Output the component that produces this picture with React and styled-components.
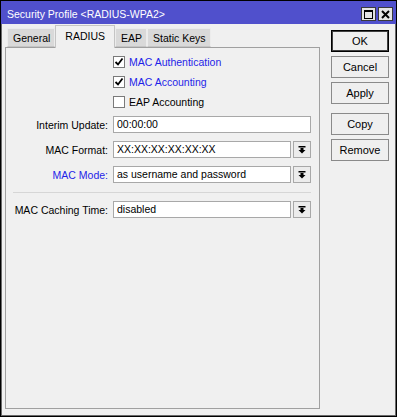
import React from 'react';
import styled, { createGlobalStyle } from 'styled-components';

const GlobalStyle = createGlobalStyle`
  html, body {
    margin: 0;
    padding: 0;
    background: #f0f0f0;
  }
  * {
    box-sizing: border-box;
  }
`;

const Frame = styled.div`
  width: 397px;
  height: 417px;
  border: 1px solid #000;
  display: flex;
  flex-direction: column;
  background: #f0f0f0;
  font-family: 'Liberation Sans', Arial, sans-serif;
  font-size: 10.5px;
  color: #000;
`;

const TitleBar = styled.div`
  height: 23px;
  flex: none;
  display: flex;
  align-items: center;
  padding: 3px 3px 0 6px;
  background: #5050cc;
  color: #fff;
  font-size: 10.5px;
`;

const Title = styled.div`
  flex: 1;
  white-space: nowrap;
`;

const TitleButtons = styled.div`
  display: flex;
  gap: 2px;
`;

const TitleButton = styled.div`
  width: 15px;
  height: 14px;
  background: #e4e4e4;
  border: 1px solid #3a3a3a;
  display: flex;
  align-items: center;
  justify-content: center;
`;

const Body = styled.div`
  flex: 1;
  display: flex;
  padding: 1px 6px 7px 4px;
  box-shadow: inset 1px 0 #6a6a6a, inset -1px 0 #6a6a6a, inset 0 -1px #6a6a6a;
`;

const LeftColumn = styled.div`
  width: 315px;
  display: flex;
  flex-direction: column;
`;

const TabStrip = styled.div`
  height: 23px;
  display: flex;
  align-items: flex-end;
  padding-left: 2px;
  margin-bottom: -1px;
  position: relative;
  z-index: 1;
`;

const Tab = styled.div`
  height: ${(p) => (p.$active ? '23px' : '19px')};
  padding: ${(p) => (p.$active ? '3px 9px 0 9px' : '2px 4px 0 5px')};
  background: ${(p) => (p.$active ? '#f0f0f0' : '#d9d9d9')};
  border: 1px solid ${(p) => (p.$active ? '#c4c4c4' : '#ececec')};
  border-bottom: ${(p) => (p.$active ? 'none' : '1px solid #c4c4c4')};
  margin-bottom: ${(p) => (p.$active ? '0' : '1px')};
  white-space: nowrap;
  line-height: 15px;
  font-size: 10.5px;
`;

const Panel = styled.div`
  flex: 1;
  border: 1px solid #a0a0a0;
  padding: 4px 8px 0 7px;
  display: flex;
  flex-direction: column;
`;

const CheckRow = styled.label`
  height: 20px;
  display: flex;
  align-items: center;
  gap: 4px;
  padding-left: 100px;
  color: ${(p) => (p.$blue ? '#1f1fe8' : '#000')};
`;

const CheckBox = styled.span`
  width: 12px;
  height: 12px;
  background: #fff;
  border: 1px solid #7a7a7a;
  display: flex;
  align-items: center;
  justify-content: center;
`;

const FieldRow = styled.div`
  display: grid;
  grid-template-columns: 95px 1fr;
  column-gap: 5px;
  align-items: center;
  height: 17px;
  margin-top: ${(p) => p.$top ?? 8}px;
`;

const Label = styled.div`
  text-align: right;
  white-space: nowrap;
  color: ${(p) => (p.$blue ? '#1f1fe8' : '#000')};
`;

const Control = styled.div`
  display: flex;
  gap: 2px;
  height: 17px;
`;

const Input = styled.div`
  flex: 1;
  height: 17px;
  background: #fff;
  border: 1px solid #a8a8a8;
  padding: 0 3px;
  line-height: 15px;
  white-space: nowrap;
  overflow: hidden;
`;

const DropButton = styled.div`
  width: 18px;
  height: 17px;
  border: 1px solid #a8a8a8;
  background: #ececec;
  display: flex;
  align-items: center;
  justify-content: center;
`;

const Separator = styled.div`
  height: 1px;
  background: #d6d6d6;
  margin: 9px 0 8px;
`;

const RightColumn = styled.div`
  width: 58px;
  margin-left: 11px;
  padding-top: 5px;
  display: flex;
  flex-direction: column;
  gap: 4px;
`;

const Button = styled.div`
  height: 22px;
  display: flex;
  align-items: center;
  justify-content: center;
  background: #efefef;
  border: 1px solid ${(p) => (p.$default ? '#000' : '#8a8a8a')};
  box-shadow: ${(p) => (p.$default ? 'inset 0 0 0 1px #404040' : 'none')};
  margin-top: ${(p) => (p.$gapAbove ? '5px' : '0')};
  font-size: 11px;
`;

const CheckMark = () => (
  <svg width="10" height="10" viewBox="0 0 10 10">
    <path d="M1.5 5 L4 7.5 L8.5 1.5" fill="none" stroke="#000" strokeWidth="1.8" />
  </svg>
);

const DropIcon = () => (
  <svg width="8" height="8" viewBox="0 0 8 8">
    <rect x="0.5" y="0" width="7" height="1.5" fill="#000" />
    <rect x="2.5" y="2" width="3" height="2" fill="#000" />
    <polygon points="0.5,4 7.5,4 4,7.5" fill="#000" />
  </svg>
);

const MaximizeIcon = () => (
  <svg width="9" height="9" viewBox="0 0 9 9">
    <rect x="0.5" y="0.5" width="8" height="8" fill="none" stroke="#000" strokeWidth="1" />
    <rect x="0" y="0" width="9" height="2" fill="#000" />
  </svg>
);

const CloseIcon = () => (
  <svg width="9" height="9" viewBox="0 0 9 9">
    <path d="M1 1 L8 8 M8 1 L1 8" stroke="#000" strokeWidth="2" />
  </svg>
);

const Check = ({ checked, blue, children }) => (
  <CheckRow $blue={blue}>
    <CheckBox>{checked && <CheckMark />}</CheckBox>
    {children}
  </CheckRow>
);

const Field = ({ label, value, blue, dropdown, top }) => (
  <FieldRow $top={top}>
    <Label $blue={blue}>{label}</Label>
    <Control>
      <Input>{value}</Input>
      {dropdown && (
        <DropButton>
          <DropIcon />
        </DropButton>
      )}
    </Control>
  </FieldRow>
);

const App = () => (
  <>
    <GlobalStyle />
    <Frame>
      <TitleBar>
        <Title>Security Profile &lt;RADIUS-WPA2&gt;</Title>
        <TitleButtons>
          <TitleButton>
            <MaximizeIcon />
          </TitleButton>
          <TitleButton>
            <CloseIcon />
          </TitleButton>
        </TitleButtons>
      </TitleBar>
      <Body>
        <LeftColumn>
          <TabStrip>
            <Tab>General</Tab>
            <Tab $active>RADIUS</Tab>
            <Tab>EAP</Tab>
            <Tab>Static Keys</Tab>
          </TabStrip>
          <Panel>
            <Check checked blue>MAC Authentication</Check>
            <Check checked blue>MAC Accounting</Check>
            <Check>EAP Accounting</Check>
            <Field label="Interim Update:" value="00:00:00" top={4} />
            <Field label="MAC Format:" value="XX:XX:XX:XX:XX:XX" dropdown />
            <Field label="MAC Mode:" value="as username and password" blue dropdown />
            <Separator />
            <Field label="MAC Caching Time:" value="disabled" dropdown top={0} />
          </Panel>
        </LeftColumn>
        <RightColumn>
          <Button $default>OK</Button>
          <Button>Cancel</Button>
          <Button>Apply</Button>
          <Button $gapAbove>Copy</Button>
          <Button>Remove</Button>
        </RightColumn>
      </Body>
    </Frame>
  </>
);

export default App;
